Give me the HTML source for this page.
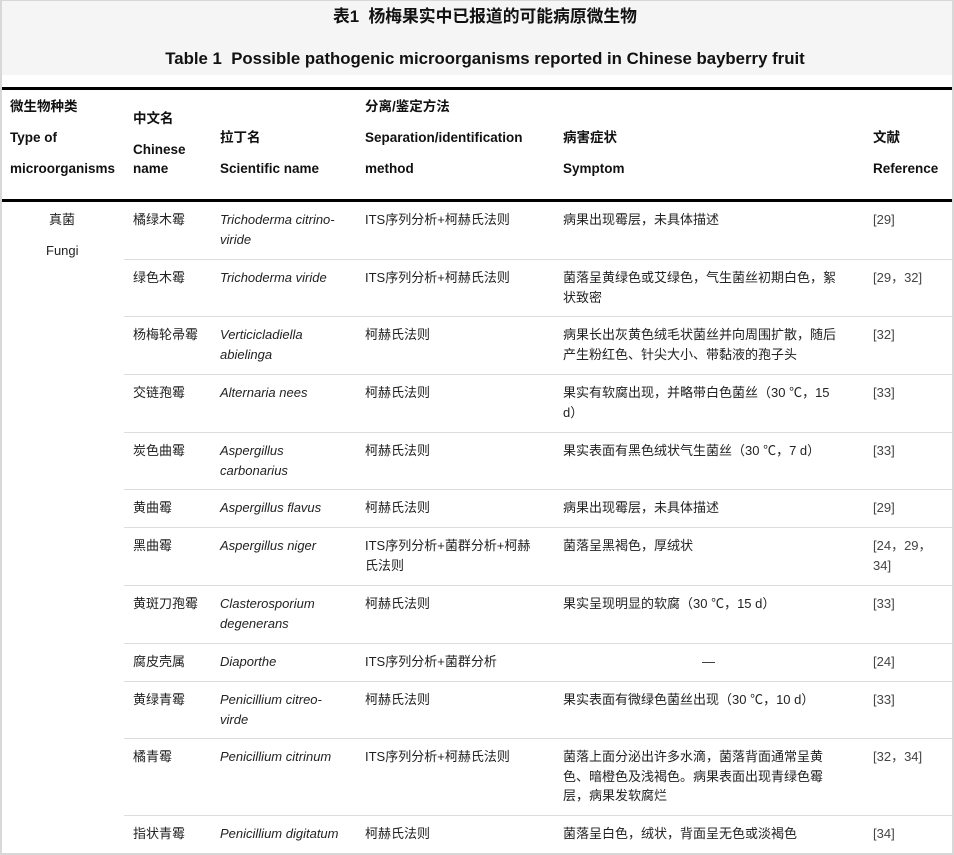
<!DOCTYPE html>
<html><head><meta charset="utf-8"><style>
*{margin:0;padding:0;box-sizing:border-box}
html,body{width:954px;height:855px;overflow:hidden;background:#fff}
body{position:relative;font-family:"Liberation Sans","Noto Sans CJK SC",sans-serif;font-size:13px;color:#222}
.t{position:absolute;white-space:nowrap;line-height:19.5px}
.b{font-weight:bold;color:#111;font-size:13.5px}
.i{font-style:italic}
.r{color:#444}
.hl{position:absolute;left:124px;width:828px;height:1px;background:#ddd}
</style></head><body>
<div style="position:absolute;left:0;top:0;width:954px;height:855px;border:1px solid #d8d8d8;border-width:1px 2px 2px 2px"></div>
<div style="position:absolute;left:2px;top:1px;width:950px;height:74px;background:#f5f5f5"></div>
<div class="t b" style="left:0;width:970px;text-align:center;top:7px;font-size:16.8px">表1&nbsp;&nbsp;杨梅果实中已报道的可能病原微生物</div>
<div class="t b" style="left:0;width:970px;text-align:center;top:49px;font-size:16.8px">Table 1&nbsp;&nbsp;Possible pathogenic microorganisms reported in Chinese bayberry fruit</div>
<div style="position:absolute;left:2px;top:87px;width:950px;height:3px;background:#000"></div>
<div style="position:absolute;left:2px;top:199px;width:950px;height:3px;background:#000"></div>
<div class="t b" style="left:10px;top:97px">微生物种类</div>
<div class="t b" style="left:10px;top:128px">Type of</div>
<div class="t b" style="left:10px;top:159px">microorganisms</div>
<div class="t b" style="left:133px;top:109px">中文名</div>
<div class="t b" style="left:133px;top:140px">Chinese</div>
<div class="t b" style="left:133px;top:159px">name</div>
<div class="t b" style="left:220px;top:128px">拉丁名</div>
<div class="t b" style="left:220px;top:159px">Scientific name</div>
<div class="t b" style="left:365px;top:97px">分离/鉴定方法</div>
<div class="t b" style="left:365px;top:128px">Separation/identification</div>
<div class="t b" style="left:365px;top:159px">method</div>
<div class="t b" style="left:563px;top:128px">病害症状</div>
<div class="t b" style="left:563px;top:159px">Symptom</div>
<div class="t b" style="left:873px;top:128px">文献</div>
<div class="t b" style="left:873px;top:159px">Reference</div>

<div class="t" style="left:49px;top:210px">真菌</div>
<div class="t" style="left:46px;top:241px">Fungi</div>

<div class="hl" style="top:259px"></div><div class="hl" style="top:316px"></div><div class="hl" style="top:374px"></div><div class="hl" style="top:432px"></div><div class="hl" style="top:489px"></div><div class="hl" style="top:527px"></div><div class="hl" style="top:585px"></div><div class="hl" style="top:643px"></div><div class="hl" style="top:681px"></div><div class="hl" style="top:738px"></div><div class="hl" style="top:815px"></div>

<div class="t" style="left:133px;top:210px">橘绿木霉</div><div class="t i" style="left:220px;top:210px">Trichoderma citrino-<br>viride</div><div class="t" style="left:365px;top:210px">ITS序列分析+柯赫氏法则</div><div class="t" style="left:563px;top:210px">病果出现霉层，未具体描述</div><div class="t r" style="left:873px;top:210px">[29]</div>

<div class="t" style="left:133px;top:268px">绿色木霉</div><div class="t i" style="left:220px;top:268px">Trichoderma viride</div><div class="t" style="left:365px;top:268px">ITS序列分析+柯赫氏法则</div><div class="t" style="left:563px;top:268px">菌落呈黄绿色或艾绿色，气生菌丝初期白色，絮<br>状致密</div><div class="t r" style="left:873px;top:268px">[29，32]</div>

<div class="t" style="left:133px;top:325px">杨梅轮帚霉</div><div class="t i" style="left:220px;top:325px">Verticicladiella<br>abielinga</div><div class="t" style="left:365px;top:325px">柯赫氏法则</div><div class="t" style="left:563px;top:325px">病果长出灰黄色绒毛状菌丝并向周围扩散，随后<br>产生粉红色、针尖大小、带黏液的孢子头</div><div class="t r" style="left:873px;top:325px">[32]</div>

<div class="t" style="left:133px;top:383px">交链孢霉</div><div class="t i" style="left:220px;top:383px">Alternaria nees</div><div class="t" style="left:365px;top:383px">柯赫氏法则</div><div class="t" style="left:563px;top:383px">果实有软腐出现，并略带白色菌丝（30 ℃，15<br>d）</div><div class="t r" style="left:873px;top:383px">[33]</div>

<div class="t" style="left:133px;top:441px">炭色曲霉</div><div class="t i" style="left:220px;top:441px">Aspergillus<br>carbonarius</div><div class="t" style="left:365px;top:441px">柯赫氏法则</div><div class="t" style="left:563px;top:441px">果实表面有黑色绒状气生菌丝（30 ℃，7 d）</div><div class="t r" style="left:873px;top:441px">[33]</div>

<div class="t" style="left:133px;top:498px">黄曲霉</div><div class="t i" style="left:220px;top:498px">Aspergillus flavus</div><div class="t" style="left:365px;top:498px">柯赫氏法则</div><div class="t" style="left:563px;top:498px">病果出现霉层，未具体描述</div><div class="t r" style="left:873px;top:498px">[29]</div>

<div class="t" style="left:133px;top:536px">黑曲霉</div><div class="t i" style="left:220px;top:536px">Aspergillus niger</div><div class="t" style="left:365px;top:536px">ITS序列分析+菌群分析+柯赫<br>氏法则</div><div class="t" style="left:563px;top:536px">菌落呈黑褐色，厚绒状</div><div class="t r" style="left:873px;top:536px">[24，29，<br>34]</div>

<div class="t" style="left:133px;top:594px">黄斑刀孢霉</div><div class="t i" style="left:220px;top:594px">Clasterosporium<br>degenerans</div><div class="t" style="left:365px;top:594px">柯赫氏法则</div><div class="t" style="left:563px;top:594px">果实呈现明显的软腐（30 ℃，15 d）</div><div class="t r" style="left:873px;top:594px">[33]</div>

<div class="t" style="left:133px;top:652px">腐皮壳属</div><div class="t i" style="left:220px;top:652px">Diaporthe</div><div class="t" style="left:365px;top:652px">ITS序列分析+菌群分析</div><div class="t" style="left:702px;top:652px">—</div><div class="t r" style="left:873px;top:652px">[24]</div>

<div class="t" style="left:133px;top:690px">黄绿青霉</div><div class="t i" style="left:220px;top:690px">Penicillium citreo-<br>virde</div><div class="t" style="left:365px;top:690px">柯赫氏法则</div><div class="t" style="left:563px;top:690px">果实表面有微绿色菌丝出现（30 ℃，10 d）</div><div class="t r" style="left:873px;top:690px">[33]</div>

<div class="t" style="left:133px;top:747px">橘青霉</div><div class="t i" style="left:220px;top:747px">Penicillium citrinum</div><div class="t" style="left:365px;top:747px">ITS序列分析+柯赫氏法则</div><div class="t" style="left:563px;top:747px">菌落上面分泌出许多水滴，菌落背面通常呈黄<br>色、暗橙色及浅褐色。病果表面出现青绿色霉<br>层，病果发软腐烂</div><div class="t r" style="left:873px;top:747px">[32，34]</div>

<div class="t" style="left:133px;top:824px">指状青霉</div><div class="t i" style="left:220px;top:824px">Penicillium digitatum</div><div class="t" style="left:365px;top:824px">柯赫氏法则</div><div class="t" style="left:563px;top:824px">菌落呈白色，绒状，背面呈无色或淡褐色</div><div class="t r" style="left:873px;top:824px">[34]</div>
</body></html>
